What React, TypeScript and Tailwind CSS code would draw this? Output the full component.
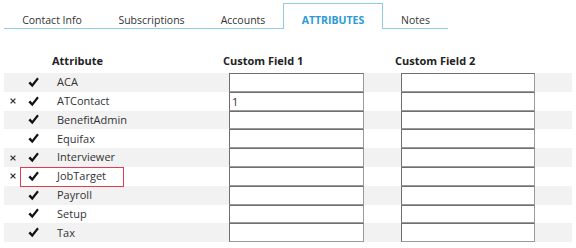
import React from "react";

type Row = { name: string; removable?: boolean; field1?: string; highlight?: boolean };

const rows: Row[] = [
  { name: "ACA" },
  { name: "ATContact", removable: true, field1: "1" },
  { name: "BenefitAdmin" },
  { name: "Equifax" },
  { name: "Interviewer", removable: true },
  { name: "JobTarget", removable: true, highlight: true },
  { name: "Payroll" },
  { name: "Setup" },
  { name: "Tax" },
];

const tabs = [
  { label: "Contact Info", w: "w-[96px]" },
  { label: "Subscriptions", w: "w-[103px]" },
  { label: "Accounts", w: "w-[80px]" },
  { label: "ATTRIBUTES", w: "w-[100px]", active: true },
  { label: "Notes", w: "w-[65px]" },
];

function Check() {
  return (
    <svg width="11" height="11" viewBox="0 0 11 11" className="block">
      <path d="M0.4 6.2 L2.3 4.5 L4.2 6.8 L9.2 0.6 L10.8 1.9 L4.3 10.2 Z" fill="#111" />
    </svg>
  );
}

function Cross() {
  return (
    <svg width="6" height="6" viewBox="0 0 6 6" className="block">
      <path d="M0.6 0.6 L5.4 5.4 M5.4 0.6 L0.6 5.4" stroke="#333" strokeWidth="1.3" />
    </svg>
  );
}

function FieldInput({ value }: { value?: string }) {
  return (
    <input
      readOnly
      value={value ?? ""}
      className="box-border h-full w-full border border-[#9a9a9a] border-l-[#6f6f6f] border-t-[#6f6f6f] bg-white px-[2px] text-[11px] text-[#333] outline-none"
    />
  );
}

export default function App() {
  return (
    <div className="h-[248px] w-[576px] bg-white pt-[3px] font-['Open_Sans',sans-serif] text-[#333]">
      <div className="ml-[4px] flex">
        {tabs.map((t) =>
          t.active ? (
            <div
              key={t.label}
              className={`${t.w} flex h-[26px] items-end justify-center border border-b-0 border-[#8ccdee] pb-[1px] text-[10.5px] leading-[16px] font-bold text-[#2b9ad5]`}
            >
              {t.label}
            </div>
          ) : (
            <div
              key={t.label}
              className={`${t.w} flex h-[26px] items-end justify-center border-b border-[#8ccdee] text-[10.5px] leading-[16px] text-[#333]`}
            >
              {t.label}
            </div>
          )
        )}
      </div>

      <div className="ml-[4px] mt-[23px] w-[568px]">
        <div className="flex h-[21px] items-center pb-[2px] text-[11px] font-bold text-[#222]">
          <div className="w-[48px]" />
          <div className="w-[171px]">Attribute</div>
          <div className="w-[172px]">Custom Field 1</div>
          <div>Custom Field 2</div>
        </div>

        {rows.map((r, i) => (
          <div
            key={r.name}
            className={`relative flex h-[18.8px] items-center text-[11px] ${i % 2 === 0 ? "bg-[#f2f2f2]" : "bg-white"}`}
          >
            <div className="flex w-[16px] justify-center pl-[2px]">{r.removable && <Cross />}</div>
            <div className="flex w-[32px] pl-[8px]">
              <Check />
            </div>
            <div className="w-[176px] pl-[5px] text-[#333]">{r.name}</div>
            <div className="h-full w-[172px] pl-[1px]">
              <div className="h-full w-[135px]">
                <FieldInput value={r.field1} />
              </div>
            </div>
            <div className="h-full w-[172px] pl-[1px]">
              <div className="h-full w-[134px]">
                <FieldInput />
              </div>
            </div>
            {r.highlight && (
              <div className="pointer-events-none absolute left-[16px] top-0 z-10 h-[20px] w-[104px] border border-[#e23a4e]" />
            )}
          </div>
        ))}
      </div>
    </div>
  );
}
